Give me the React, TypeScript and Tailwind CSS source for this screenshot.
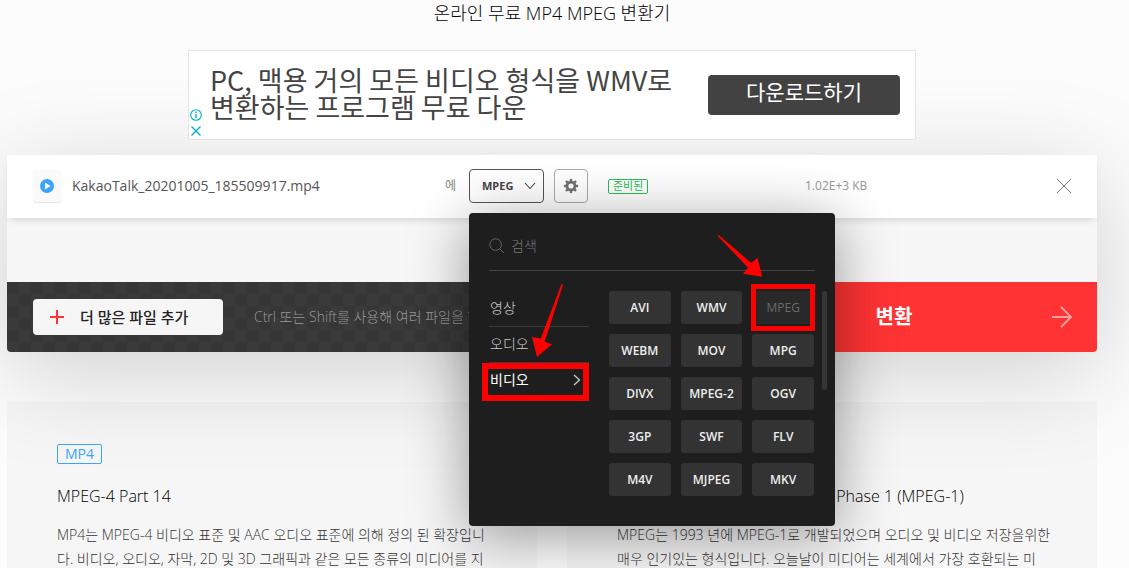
import React, { useState } from "react";

const formats = [
  "AVI", "WMV", "MPEG",
  "WEBM", "MOV", "MPG",
  "DIVX", "MPEG-2", "OGV",
  "3GP", "SWF", "FLV",
  "M4V", "MJPEG", "MKV",
];

const categories = ["영상", "오디오", "비디오"];

function Banner() {
  return (
    <aside className="relative mx-auto flex h-[90px] w-full max-w-[728px] items-center justify-between border border-[#e4e4e4] bg-white pr-[15px] pl-[21px]">
      <p className="pb-1 font-['Noto_Sans_CJK_KR',sans-serif] text-[27px] leading-[27px] text-[#444]">
        PC, 맥용 거의 모든 비디오 형식을 WMV로
        <br />
        변환하는 프로그램 무료 다운
      </p>
      <a
        href="#download"
        className="flex h-10 w-48 items-center justify-center rounded bg-[#424242] pb-1 text-[21px] text-white"
      >
        다운로드하기
      </a>
      <div className="absolute bottom-[2px] left-[1px] flex flex-col gap-1 text-[#00aecd]">
        <svg viewBox="0 0 12 12" className="size-3" fill="none" stroke="currentColor">
          <circle cx="6" cy="6" r="5.3" strokeWidth="1.1" />
          <path d="M6 5v4M6 2.6v1.4" strokeWidth="1.4" />
        </svg>
        <svg viewBox="0 0 12 12" className="size-3" fill="none" stroke="currentColor">
          <path d="M1.5 1.5l9 9M10.5 1.5l-9 9" strokeWidth="1.4" />
        </svg>
      </div>
    </aside>
  );
}

function Gear() {
  return (
    <svg viewBox="0 0 16 16" className="size-4" fill="none" stroke="#727272">
      <circle cx="8" cy="8" r="4" strokeWidth="2.8" />
      {[0, 45, 90, 135, 180, 225, 270, 315].map((a) => (
        <path key={a} d="M8 3.2V.9" strokeWidth="2.4" transform={`rotate(${a} 8 8)`} />
      ))}
    </svg>
  );
}

function FormatMenu() {
  const [category, setCategory] = useState("비디오");
  return (
    <div className="absolute top-full left-0 z-10 mt-[10px] w-[366px] rounded bg-[#1e1e1e] px-5 pb-[30px] shadow-[0_10px_60px_rgba(0,0,0,0.4)]">
      <label className="flex h-[58px] items-center gap-[6px] border-b border-[#444] pt-2">
        <svg viewBox="0 0 16 16" className="size-4 text-[#666]" fill="none" stroke="currentColor">
          <circle cx="6.6" cy="6.6" r="5.8" />
          <path d="M10.8 10.8l4.4 4.4" />
        </svg>
        <input
          type="text"
          aria-label="검색"
          placeholder="검색"
          className="min-w-0 flex-1 bg-transparent text-sm font-light text-white outline-none placeholder:text-[#777]"
        />
      </label>
      <div className="flex items-start gap-5 pt-5">
        <div className="flex w-[100px] flex-col">
          {categories.map((name) => (
            <button
              key={name}
              type="button"
              onClick={() => setCategory(name)}
              className={
                name === category
                  ? "flex h-9 items-center justify-between px-[1px] pb-[2px] text-sm text-white"
                  : "flex h-9 items-center justify-between border-b border-[#3c3c3c] px-[1px] pb-[2px] text-sm font-light text-[#ccc]"
              }
            >
              {name}
              {name === category && (
                <svg viewBox="0 0 8 12" className="mr-[7px] h-3 w-2" fill="none" stroke="#ccc" strokeWidth="1.3">
                  <path d="M1 1l5.500 5L1 11" />
                </svg>
              )}
            </button>
          ))}
        </div>
        <div className="grid w-[205px] grid-cols-3 gap-[10px]">
          {formats.map((name) => (
            <button
              key={name}
              type="button"
              disabled={name === "MPEG"}
              className="h-[33px] rounded-[3px] bg-[#333] text-xs font-semibold text-[#eee] disabled:bg-[#292929] disabled:font-normal disabled:text-[#6a6a6a]"
            >
              {name}
            </button>
          ))}
        </div>
      </div>
      <div className="absolute top-[78px] right-2 h-[99px] w-[5px] rounded-sm bg-[#363636]" />
      <div className="absolute top-[71px] right-5 h-[47px] w-16 border-[5px] border-[#f00]" />
      <div className="absolute top-[150px] left-[13px] h-[38px] w-[107px] border-[6px] border-[#f00]" />
      <svg viewBox="0 0 366 313" className="pointer-events-none absolute inset-0 size-full" fill="#f00">
        <path d="M92.5 71L94 71.8L75.7 128.7L83 131.3L68 144L63 124L71.7 125.6Z" />
        <path d="M249.5 21.8L282.3 50L288.5 44.7L293.3 63.7L274 60.7L279 54.7L248.8 23Z" />
      </svg>
    </div>
  );
}

function FileRow() {
  return (
    <div className="relative grid h-[63px] grid-cols-[462fr_336fr_292fr] items-center bg-white pb-px shadow-[0_5px_7px_-3px_rgba(0,0,0,0.14)]">
      <div className="flex items-center pr-[13px] pl-[26px]">
        <div className="flex h-8 w-7 items-center justify-center rounded-[3px] bg-[#fafafa] shadow-[0_1px_1px_rgba(0,0,0,0.12)]">
          <svg viewBox="0 0 14 14" className="size-[14px]">
            <circle cx="7" cy="7" r="7" fill="#3aa5fb" />
            <path d="M5 3.6L10.6 7L5 10.4Z" fill="#fff" />
          </svg>
        </div>
        <span className="ml-[11px] text-sm text-[#555]">KakaoTalk_20201005_185509917.mp4</span>
        <span className="ml-auto text-xs text-[#888]">에</span>
      </div>
      <div className="relative flex items-center">
        <div className="relative">
          <select
            aria-label="출력 형식"
            className="block h-[34px] w-[75px] appearance-none rounded border border-[#555] bg-transparent pl-3 text-[11px] font-bold text-[#444]"
          >
            <option>MPEG</option>
          </select>
          <svg
            viewBox="0 0 12 8"
            className="pointer-events-none absolute top-[13px] right-[8px] h-2 w-3"
            fill="none"
            stroke="#444"
            strokeWidth="1.1"
          >
            <path d="M1 1l5 5.500L11 1" />
          </svg>
        </div>
        <button
          type="button"
          aria-label="설정"
          className="ml-[10px] flex size-[34px] items-center justify-center rounded border border-[#aaa]"
        >
          <Gear />
        </button>
        <span className="ml-5 flex h-[15px] items-center rounded-[2px] border border-[#2bbd56] px-1 text-[11px] text-[#2bbd56]">
          준비된
        </span>
        <FormatMenu />
      </div>
      <div className="flex items-center justify-between pr-[26px]">
        <span className="text-xs text-[#999]">1.02E+3 KB</span>
        <button type="button" aria-label="삭제">
          <svg viewBox="0 0 14 14" className="size-[14px]" fill="none" stroke="#777">
            <path d="M0 0l14 14M14 0L0 14" />
          </svg>
        </button>
      </div>
    </div>
  );
}

function ActionBar() {
  return (
    <div className="flex h-[70px] overflow-hidden rounded-b">
      <div className="flex flex-1 items-center overflow-hidden bg-[repeating-conic-gradient(#3a3a3a_0_25%,#363636_0_50%)] bg-[length:24px_24px] pl-[26px]">
        <button
          type="button"
          className="flex h-9 w-[190px] shrink-0 items-center gap-4 rounded bg-[#f6f6f6] pl-[17px] text-[15px] font-medium text-[#222]"
        >
          <svg viewBox="0 0 14 14" className="size-[14px]" stroke="#f33" strokeWidth="2">
            <path d="M7 0v14M0 7h14" />
          </svg>
          더 많은 파일 추가
        </button>
        <span className="ml-[31px] text-sm font-light whitespace-nowrap text-[#999]">
          Ctrl 또는 Shift를 사용해 여러 파일을 한
        </span>
      </div>
      <button type="button" className="relative w-[406px] bg-[#f33] text-xl font-bold text-white">
        변환
        <svg
          viewBox="0 0 20 22"
          className="absolute top-6 right-[25px] h-[22px] w-5"
          fill="none"
          stroke="#ffa3a3"
          strokeWidth="1.800"
        >
          <path d="M0 11h19M9 1l10 10L9 21" />
        </svg>
      </button>
    </div>
  );
}

function InfoCard({ tag, title, children }: { tag: string; title: string; children: React.ReactNode }) {
  return (
    <article className="bg-black/[0.025] px-[50px] pt-[42px]">
      <span className="flex h-5 w-fit items-center rounded-[2px] border border-[#3aa5fb] px-[7px] text-sm text-[#3aa5fb]">
        {tag}
      </span>
      <h2 className="mt-5 text-base leading-6 font-light text-black">{title}</h2>
      <p className="mt-[15px] text-sm leading-6 font-light whitespace-nowrap text-[#333]">{children}</p>
    </article>
  );
}

export default function App() {
  return (
    <main className="flex h-screen flex-col overflow-hidden bg-[#fcfcfc] pr-8 pl-[7px] font-['Open_Sans','Noto_Sans_CJK_KR',sans-serif]">
      <section className="relative">
        <div className="absolute inset-x-0 top-[155px] bottom-0 rounded shadow-[0_20px_100px_rgba(0,0,0,0.18)]" />
        <h1 className="relative mb-6 text-center text-lg leading-[26px] font-light text-black">
          온라인 무료 MP4 MPEG 변환기
        </h1>
        <Banner />
        <div className="relative z-10 mt-[15px] bg-[#f7f7f7]">
          <FileRow />
          <div className="h-16" />
          <ActionBar />
        </div>
      </section>
      <section className="relative mt-[50px] grid flex-1 grid-cols-2 gap-[30px]">
        <InfoCard tag="MP4" title="MPEG-4 Part 14">
          MP4는 MPEG-4 비디오 표준 및 AAC 오디오 표준에 의해 정의 된 확장입니
          <br />
          다. 비디오, 오디오, 자막, 2D 및 3D 그래픽과 같은 모든 종류의 미디어를 지
        </InfoCard>
        <InfoCard tag="MPEG" title="Moving Picture Experts Group Phase 1 (MPEG-1)">
          MPEG는 1993 년에 MPEG-1로 개발되었으며 오디오 및 비디오 저장을위한
          <br />
          매우 인기있는 형식입니다. 오늘날이 미디어는 세계에서 가장 호환되는 미
        </InfoCard>
      </section>
    </main>
  );
}
